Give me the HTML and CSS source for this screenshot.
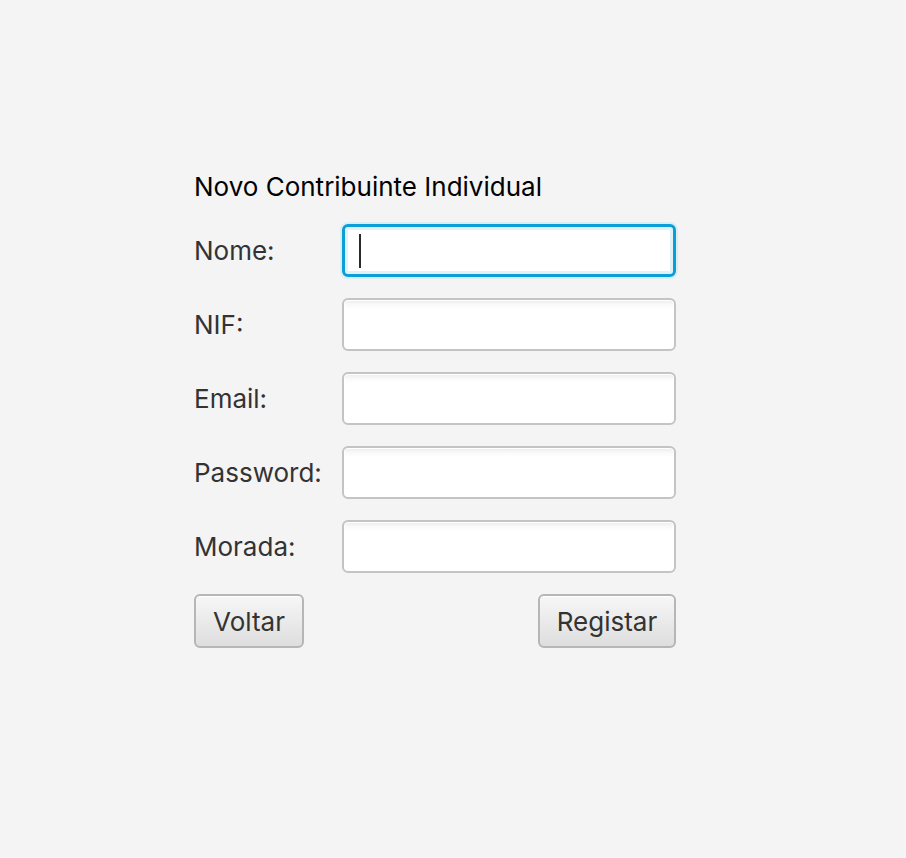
FILE: index.html
```html
<!DOCTYPE html>
<html>
<head>
<meta charset="utf-8">
<link rel="stylesheet" href="styles.css">
</head>
<body>
<div class="form">
  <div class="title">Novo Contribuinte Individual</div>
  <div class="grid">
    <div class="label">Nome:</div>
    <div class="field focused"><span class="caret"></span></div>
    <div class="label">NIF:</div>
    <div class="field"></div>
    <div class="label">Email:</div>
    <div class="field"></div>
    <div class="label">Password:</div>
    <div class="field"></div>
    <div class="label">Morada:</div>
    <div class="field"></div>
  </div>
  <div class="buttons">
    <div class="btn voltar">Voltar</div>
    <div class="btn registar">Registar</div>
  </div>
</div>
</body>
</html>
```
FILE: styles.css
```css
html, body {
  margin: 0;
  padding: 0;
  background: #f4f4f4;
  width: 906px;
  height: 858px;
  overflow: hidden;
}
body {
  font-family: Inter, "Liberation Sans", sans-serif;
  font-size: 26px;
  color: #333333;
}
.form {
  padding-top: 170px;
  padding-left: 194px;
  width: 482px;
}
.title {
  color: #000;
  height: 34px;
  line-height: 34px;
  margin-bottom: 20px;
}
.grid {
  display: grid;
  grid-template-columns: 148px 334px;
  grid-auto-rows: 53px;
  row-gap: 21px;
}
.label {
  display: flex;
  align-items: center;
  line-height: 30px;
}
.field {
  box-sizing: border-box;
  border: 2px solid #c4c4c4;
  border-radius: 6px;
  background: linear-gradient(#ececec 0px, #fafafa 5px, #ffffff 9px);
  box-shadow: inset 0 0 0 1px #fff;
}
.field.focused {
  border: 3px solid #0a9fd6;
  box-shadow: 0 0 0 2px #dbeef6, inset 0 0 0 3px #e2f1f8;
  background: #fff;
  display: flex;
  align-items: center;
  padding-left: 14px;
}
.caret {
  display: block;
  width: 2px;
  height: 34px;
  background: #2a2a2a;
}
.buttons {
  margin-top: 21px;
  display: flex;
  justify-content: space-between;
}
.btn {
  box-sizing: border-box;
  height: 54px;
  border: 2px solid #b6b6b6;
  border-radius: 6px;
  background: linear-gradient(#f7f7f7, #dedede);
  box-shadow: inset 0 1px 0 #ffffff;
  display: flex;
  align-items: center;
  justify-content: center;
  color: #333;
}
.voltar { width: 110px; }
.registar { width: 138px; }
```
